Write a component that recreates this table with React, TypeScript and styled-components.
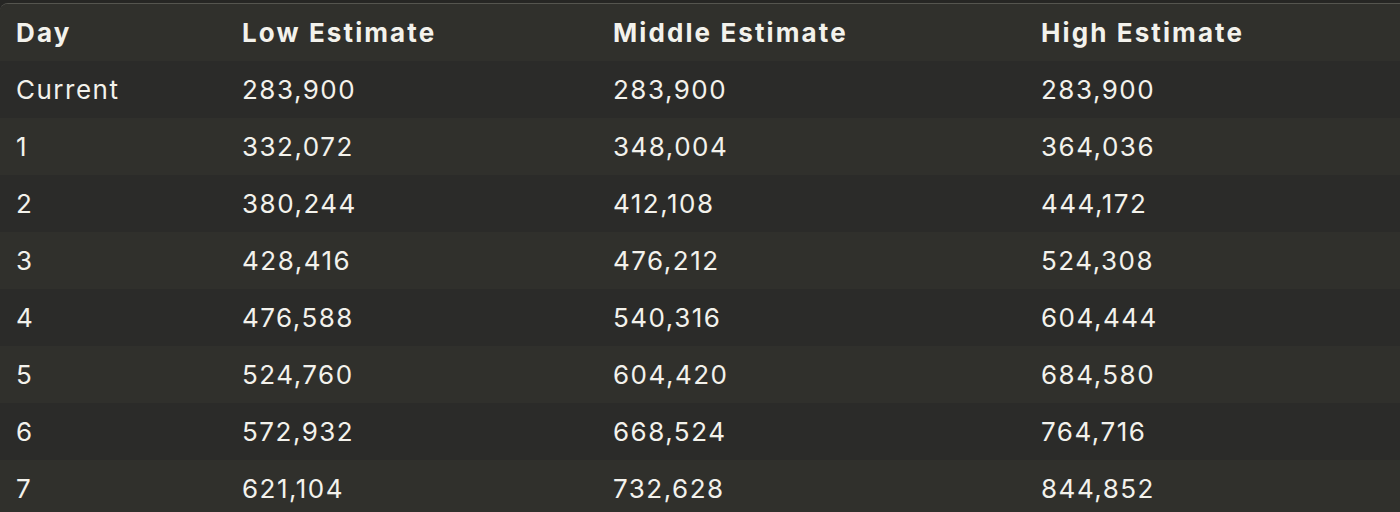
import React from 'react';
import styled, {createGlobalStyle} from "styled-components";

const rows = [
    ["Current", "283,900", "283,900", "283,900"],
    ["1", "332,072", "348,004", "364,036"],
    ["2", "380,244", "412,108", "444,172"],
    ["3", "428,416", "476,212", "524,308"],
    ["4", "476,588", "540,316", "604,444"],
    ["5", "524,760", "604,420", "684,580"],
    ["6", "572,932", "668,524", "764,716"],
    ["7", "621,104", "732,628", "844,852"],
];

const widths = [226, 371, 428, 375];

export default function App() {
    return (
        <>
            <GlobalStyle/>
            <TableFrame>
                <Table>
                    <colgroup>
                        {widths.map((w, i) => <col key={i} style={{width: w}}/>)}
                    </colgroup>
                    <thead>
                    <Row $shade>
                        <HeadCell>Day</HeadCell>
                        <HeadCell>Low Estimate</HeadCell>
                        <HeadCell>Middle Estimate</HeadCell>
                        <HeadCell>High Estimate</HeadCell>
                    </Row>
                    </thead>
                    <tbody>
                    {rows.map((r, i) => (
                        <Row key={r[0]} $shade={i % 2 === 1}>
                            {r.map((c, j) => <Cell key={j}>{c}</Cell>)}
                        </Row>
                    ))}
                    </tbody>
                </Table>
            </TableFrame>
        </>
    );
}

const GlobalStyle = createGlobalStyle`
    body {
        margin: 0;
        background: #262624;
        overflow: hidden;
    }
`

const TableFrame = styled.div`
    margin-top: 3px;
    border-top: 1px solid #55554f;
    border-top-left-radius: 8px;
    overflow: hidden;
    background: #2b2b29;
`

const Table = styled.table`
    width: 1400px;
    border-collapse: collapse;
    table-layout: fixed;
    font-family: Inter, "Noto Sans", sans-serif;
    color: #f3f2ec;
`

const Row = styled.tr<{ $shade?: boolean }>`
    height: 57px;
    background: ${props => props.$shade ? "#30302c" : "#2b2b29"};
`

const HeadCell = styled.th`
    padding: 0 0 0 16px;
    text-align: left;
    font-size: 26px;
    font-weight: 700;
    letter-spacing: 2.1px;
`

const Cell = styled.td`
    padding: 0 0 0 16px;
    font-size: 26px;
    font-weight: 400;
    letter-spacing: 1.5px;
`
